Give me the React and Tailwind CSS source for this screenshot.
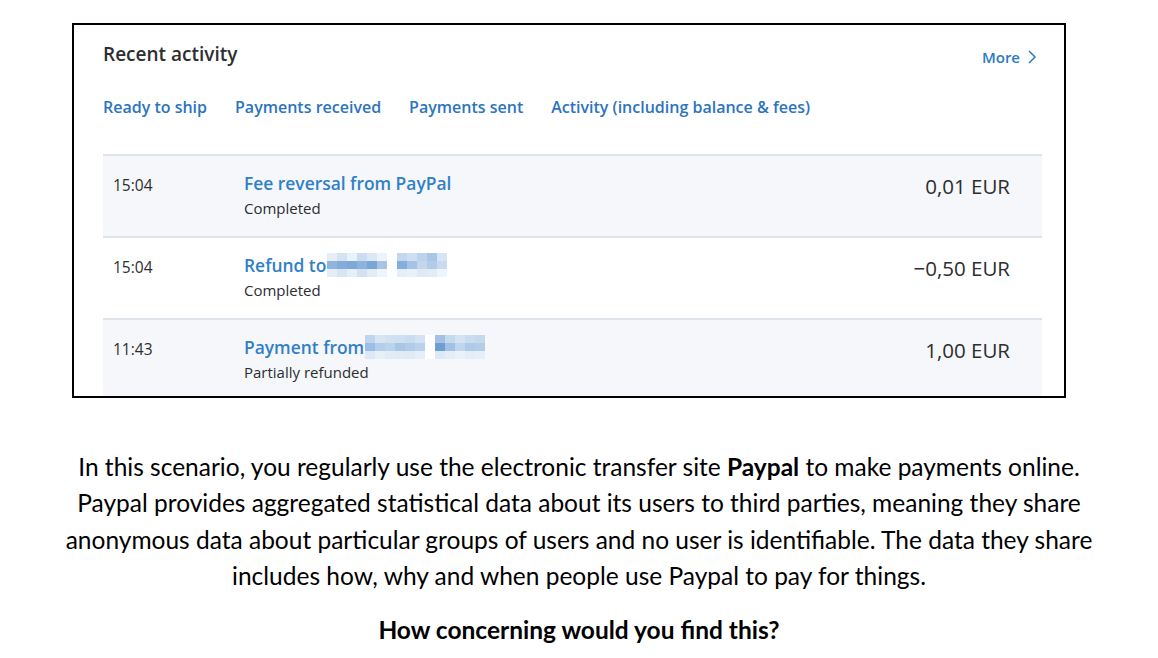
import React from 'react';

const rows = [
    { time: '15:04', title: 'Fee reversal from PayPal', status: 'Completed', amount: '0,01 EUR', shade: true },
    { time: '15:04', title: 'Refund to', status: 'Completed', amount: '−0,50 EUR', blur: 'a' },
    { time: '11:43', title: 'Payment from', status: 'Partially refunded', amount: '1,00 EUR', shade: true, blur: 'b' },
];

// pixelated censor blocks over names (3 rows of cells)
const grids = {
    a: [
        ['#e6eff8', '#d3e3f3', '#e9f1f9', '#c9dcf0', '#dce8f5', '#edf3fa', '#ffffff', '#c3d8ee', '#cddff1', '#bcd3ec', '#a9c6e6', '#d6e5f4'],
        ['#8fb4de', '#84acda', '#7ea8d8', '#8cb2dd', '#7aa5d7', '#a7c4e5', '#ffffff', '#86aedb', '#a5c3e5', '#c2d7ee', '#b2cbe9', '#c7daef'],
        ['#e3edf8', '#d8e6f4', '#e6eff8', '#d2e2f3', '#e1ecf7', '#eef4fa', '#ffffff', '#e4eef8', '#e8f0f9', '#dfeaf6', '#e2ecf7', '#eef4fb'],
    ],
    b: [
        ['#bfd5ed', '#d8e6f4', '#d1e1f2', '#cfe0f2', '#c9dcf0', '#d4e3f3', '#ffffff', '#a2c1e4', '#c6daef', '#d3e3f3', '#cadcf0', '#c4d8ee'],
        ['#9dbde2', '#b5cdea', '#bcd3ec', '#a9c6e6', '#b2cbe9', '#bad1eb', '#ffffff', '#6f9ed3', '#a2c1e4', '#c0d6ed', '#afc9e8', '#b3cce9'],
        ['#dce8f5', '#e7eff8', '#e2ecf7', '#e0ebf6', '#dfeaf6', '#e6eff8', '#ffffff', '#dde9f5', '#e4edf8', '#e9f1f9', '#e3edf8', '#e6eff8'],
    ],
};

const Blur = ({ variant }) => {
    const g = grids[variant];
    return (
        <svg width="120" height="24" className="ml-[1px] block">
            {g.map((row, y) =>
                row.map((c, x) => <rect key={`${x}-${y}`} x={x * 10} y={y * 8} width="10" height="8" fill={c} />)
            )}
        </svg>
    );
};

const App = () => {
    return (
        <div className="w-[1158px] h-[658px] bg-white overflow-hidden">
            <div className="pt-[23px] pl-[72px]">
                <div
                    className="w-[994px] h-[375px] border-2 border-black overflow-hidden pl-[29px] pr-[22px]"
                    style={{ fontFamily: '"Open Sans", "Noto Sans", sans-serif' }}
                >
                    <div className="flex items-center justify-between h-[24px] mt-[17px]">
                        <div className="text-[19px] font-semibold text-[#2c2e2f]">Recent activity</div>
                        <div className="flex items-center text-[15px] font-semibold text-[#2c7bc4] mr-[5px] mt-[6px]">
                            More
                            <svg width="10" height="16" viewBox="0 0 10 16" className="ml-[7px]">
                                <path d="M2 2 L8 8 L2 14" fill="none" stroke="#2c7bc4" strokeWidth="1.5" />
                            </svg>
                        </div>
                    </div>
                    <div className="flex gap-[28px] mt-[29px] text-[16px] font-semibold text-[#2c74bd] h-[24px] items-center">
                        <span>Ready to ship</span>
                        <span>Payments received</span>
                        <span>Payments sent</span>
                        <span>Activity (including balance &amp; fees)</span>
                    </div>
                    <div className="mt-[35px]">
                        {rows.map((r, i) => (
                            <div
                                key={i}
                                className={`h-[82px] border-t-2 border-[#dfe4ea] flex items-start pt-[15px] pl-[10px] pr-[32px] ${r.shade ? 'bg-[#f5f7fa]' : 'bg-white'}`}
                            >
                                <div className="w-[131px] mt-[2px] text-[15.5px] leading-[24px] text-[#2c2e2f]">{r.time}</div>
                                <div className="flex-1">
                                    <div className="text-[17.4px] leading-[24px] font-semibold text-[#3080c8] flex items-center">
                                        {r.title}
                                        {r.blur && <Blur variant={r.blur} />}
                                    </div>
                                    <div className="text-[15px] leading-[22px] mt-[2px] text-[#2c2e2f]">{r.status}</div>
                                </div>
                                <div className="mt-[1px] text-[20.5px] leading-[28px] text-[#2c2e2f]">{r.amount}</div>
                            </div>
                        ))}
                    </div>
                </div>
            </div>
            <div
                className="mt-[51px] text-center text-[24.5px] leading-[36.3px] text-black"
                style={{ fontFamily: 'Lato, "Liberation Sans", sans-serif' }}
            >
                <p>
                    In this scenario, you regularly use the electronic transfer site <b>Paypal</b> to make payments online.
                    <br />
                    Paypal provides aggregated statistical data about its users to third parties, meaning they share
                    <br />
                    anonymous data about particular groups of users and no user is identifiable. The data they share
                    <br />
                    includes how, why and when people use Paypal to pay for things.
                </p>
                <p className="mt-[18px] font-bold">How concerning would you find this?</p>
            </div>
        </div>
    );
};

export default App;
